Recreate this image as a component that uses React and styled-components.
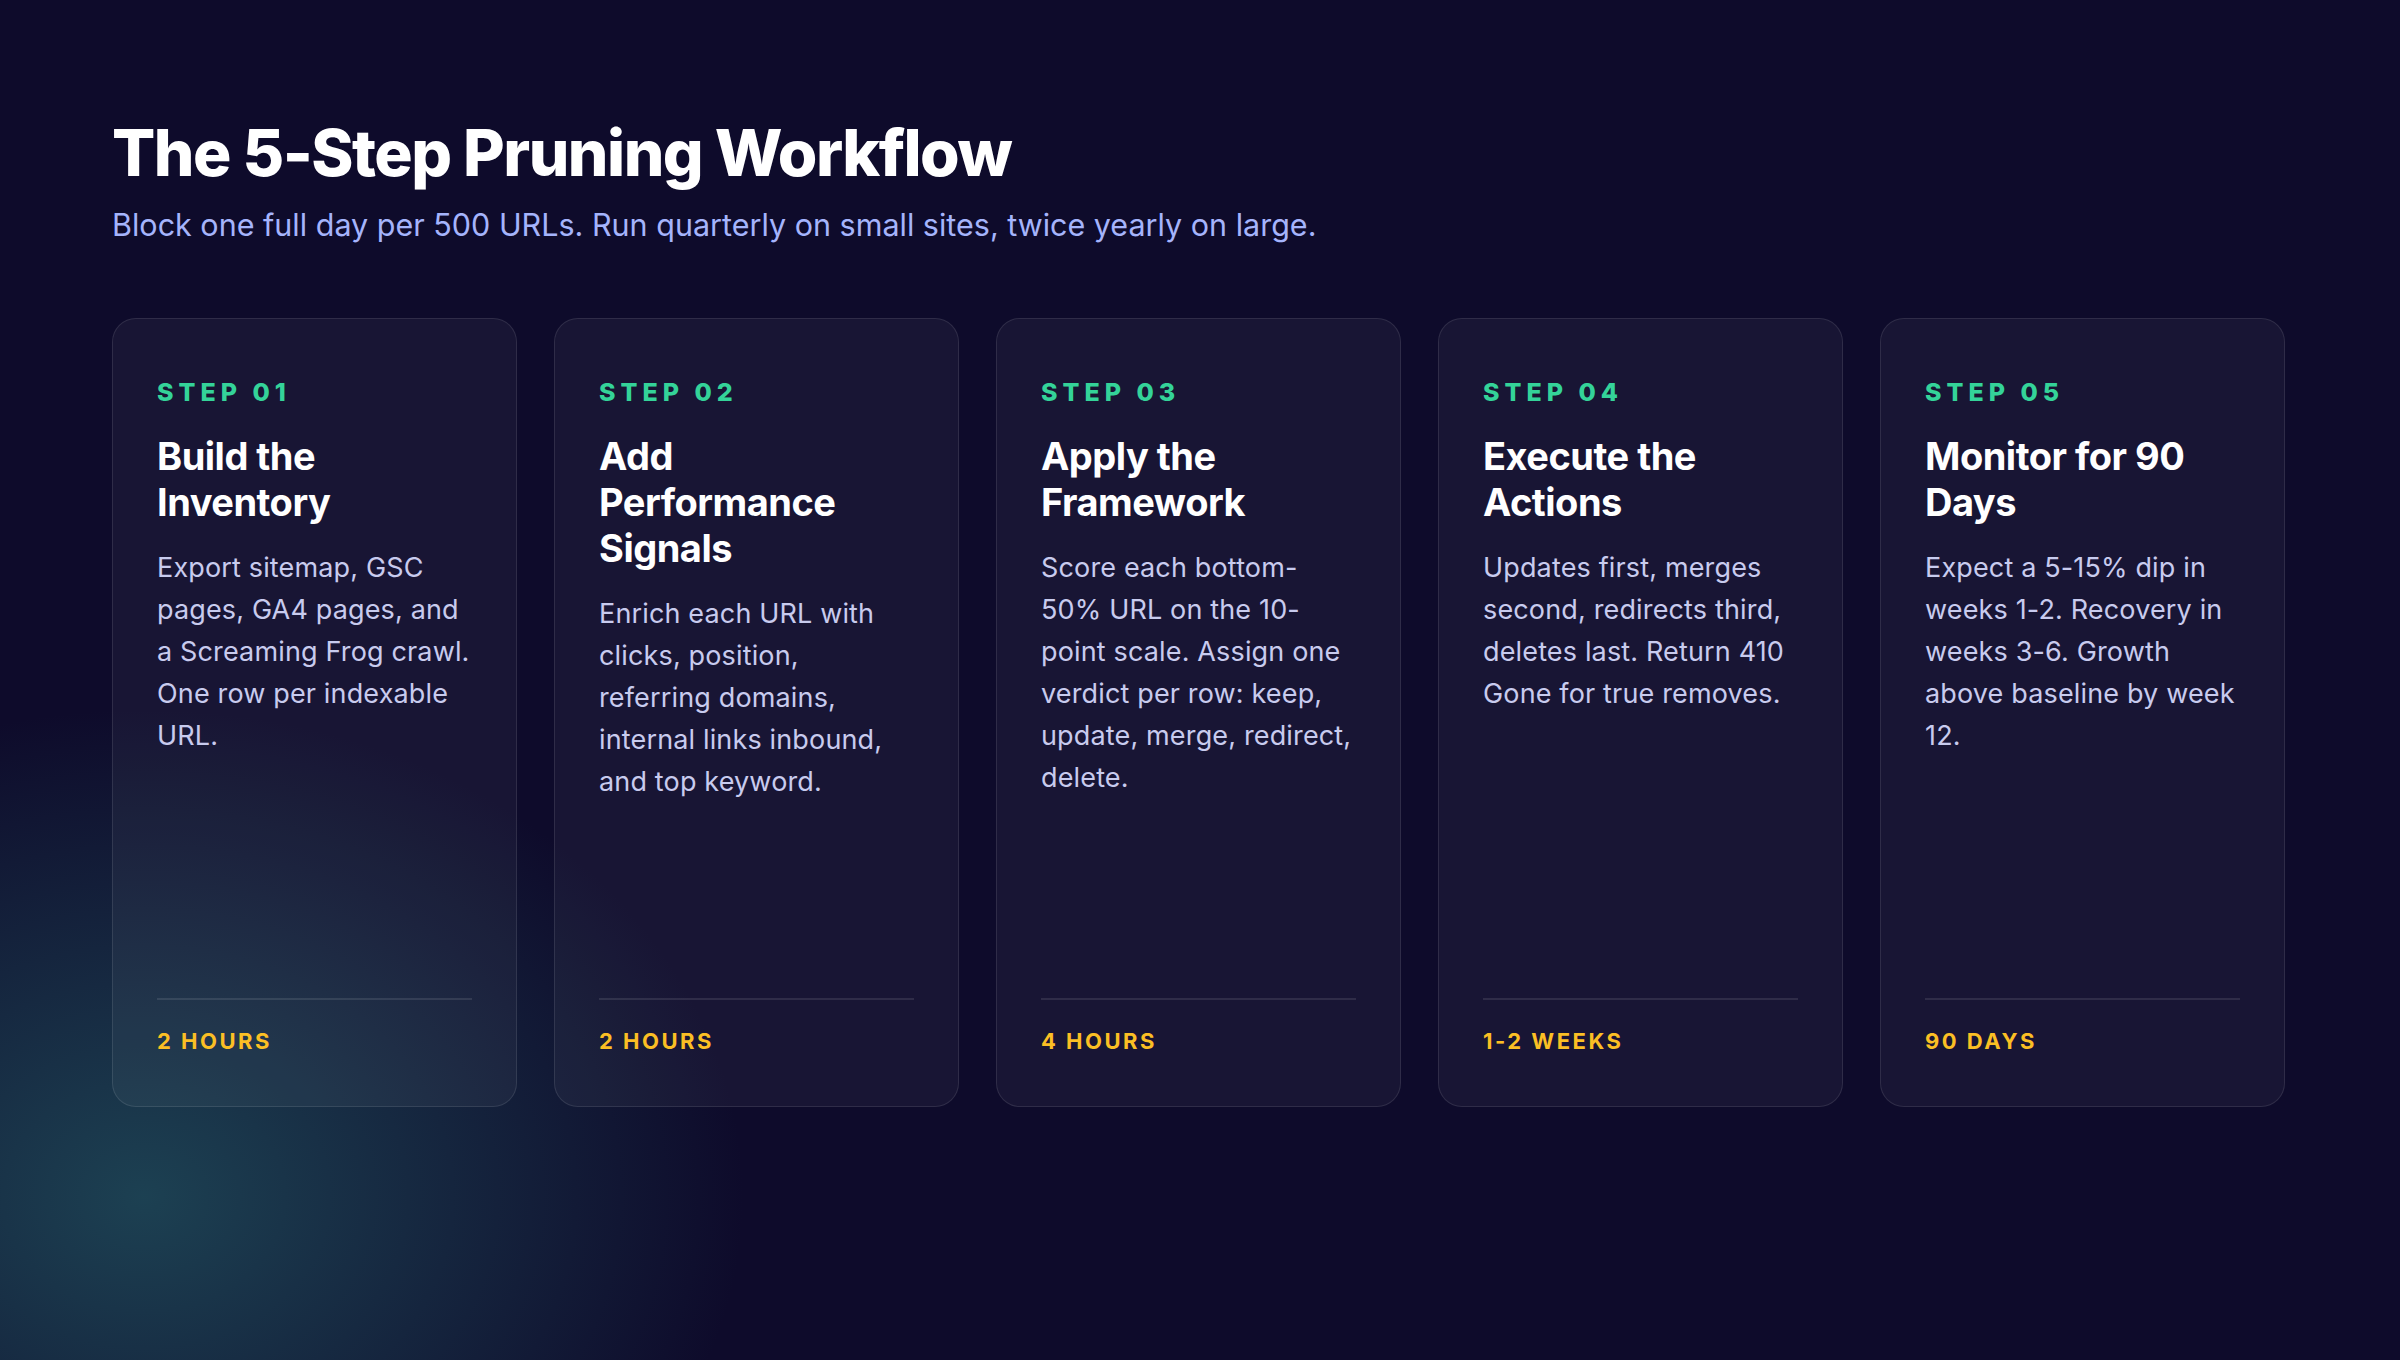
import React from 'react'
import styled, { createGlobalStyle } from 'styled-components'

const Global = createGlobalStyle`
  html, body { margin: 0; padding: 0; }
  body {
    font-family: Inter, "Noto Sans", sans-serif;
    background: #0e0b2b;
  }
`

const steps = [
  { n: '01', title: 'Build the Inventory', body: 'Export sitemap, GSC pages, GA4 pages, and a Screaming Frog crawl. One row per indexable URL.', time: '2 HOURS' },
  { n: '02', title: 'Add Performance Signals', body: 'Enrich each URL with clicks, position, referring domains, internal links inbound, and top keyword.', time: '2 HOURS' },
  { n: '03', title: 'Apply the Framework', body: 'Score each bottom-50% URL on the 10-point scale. Assign one verdict per row: keep, update, merge, redirect, delete.', time: '4 HOURS' },
  { n: '04', title: 'Execute the Actions', body: 'Updates first, merges second, redirects third, deletes last. Return 410 Gone for true removes.', time: '1-2 WEEKS' },
  { n: '05', title: 'Monitor for 90 Days', body: 'Expect a 5-15% dip in weeks 1-2. Recovery in weeks 3-6. Growth above baseline by week 12.', time: '90 DAYS' },
]

const Page = styled.div`
  width: 2400px;
  height: 1360px;
  box-sizing: border-box;
  padding: 115px 112px 0;
  background:
    radial-gradient(ellipse 800px 650px at 6% 88%, rgba(32, 78, 92, 0.8), rgba(32, 78, 92, 0) 75%),
    #0e0b2b;
  overflow: hidden;
`

const Heading = styled.h1`
  margin: 0;
  font-size: 64px;
  line-height: 1.2;
  font-weight: 800;
  letter-spacing: -1.5px;
  color: #ffffff;
`

const Sub = styled.p`
  margin: 12px 0 0;
  font-size: 30.5px;
  line-height: 42px;
  color: #a5b4fc;
`

const Grid = styled.div`
  margin-top: 72px;
  display: grid;
  grid-template-columns: repeat(5, 405px);
  gap: 37px;
`

const Card = styled.div`
  height: 789px;
  box-sizing: border-box;
  padding: 58px 44px 52px;
  display: flex;
  flex-direction: column;
  border-radius: 24px;
  border: 1.5px solid rgba(255, 255, 255, 0.1);
  background: rgba(255, 255, 255, 0.045);
`

const Label = styled.div`
  font-size: 25px;
  font-weight: 800;
  letter-spacing: 5px;
  color: #34d399;
`

const Title = styled.h2`
  margin: 26px 0 0;
  font-size: 38px;
  line-height: 46px;
  font-weight: 700;
  letter-spacing: -0.5px;
  color: #ffffff;
`

const Body = styled.p`
  margin: 22px 0 0;
  flex: 1;
  font-size: 27px;
  line-height: 42px;
  letter-spacing: 0.15px;
  color: #c8cbee;
`

const Footer = styled.div`
  border-top: 2px solid rgba(255, 255, 255, 0.1);
  padding-top: 28px;
  font-size: 22px;
  font-weight: 700;
  letter-spacing: 2.5px;
  color: #fbbf24;
`

export default function App() {
  return (
    <Page>
      <Global />
      <Heading>The 5-Step Pruning Workflow</Heading>
      <Sub>Block one full day per 500 URLs. Run quarterly on small sites, twice yearly on large.</Sub>
      <Grid>
        {steps.map(s => (
          <Card key={s.n}>
            <Label>STEP {s.n}</Label>
            <Title>{s.title}</Title>
            <Body>{s.body}</Body>
            <Footer>{s.time}</Footer>
          </Card>
        ))}
      </Grid>
    </Page>
  )
}
